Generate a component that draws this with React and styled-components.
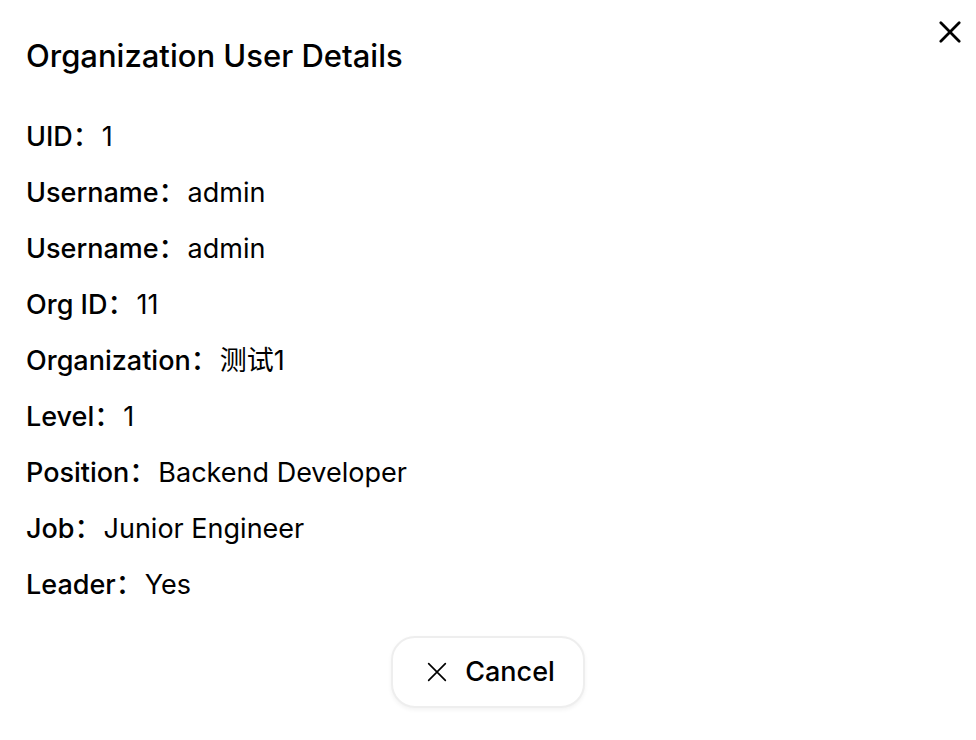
import React from "react";
import styled, { createGlobalStyle } from "styled-components";

const GlobalStyle = createGlobalStyle`
  body {
    margin: 0;
    background-color: #fff;
    color: #000;
    font-family: Inter, "Noto Sans CJK SC", sans-serif;
  }
`;

const Dialog = styled.div`
  padding: 12px 14px 32px 26px;
  font-size: 27px;
`;

const Header = styled.header`
  display: flex;
  justify-content: space-between;
  align-items: flex-start;

  h1 {
    margin: 20px 0 0;
    font-size: 31px;
    line-height: 48px;
    font-weight: 500;
  }
`;

const CloseButton = styled.button`
  display: flex;
  padding: 9px 1px;
  border: none;
  background: none;
  color: #000;
  cursor: pointer;
`;

const Details = styled.dl`
  display: flex;
  flex-direction: column;
  gap: 16px;
  margin: 37px 0 0;
`;

const DetailRow = styled.div`
  display: flex;
  gap: 2px;
  line-height: 40px;

  dt {
    font-weight: 500;
  }

  dd {
    margin: 0;
  }
`;

const Footer = styled.footer`
  display: flex;
  justify-content: center;
  margin: 31px 12px 0 0;
`;

const CancelButton = styled.button`
  display: flex;
  align-items: center;
  gap: 18px;
  padding: 14px 28px 14px 34px;
  border: 2px solid #eee;
  border-radius: 24px;
  background-color: #fff;
  box-shadow: 0 2px 4px rgba(0, 0, 0, 0.05);
  color: #000;
  font-family: inherit;
  font-size: 27px;
  font-weight: 500;
  line-height: 40px;
  cursor: pointer;
`;

const details = [
  { label: "UID", value: "1" },
  { label: "Username", value: "admin" },
  { label: "Username", value: "admin" },
  { label: "Org ID", value: "11" },
  { label: "Organization", value: "测试1" },
  { label: "Level", value: "1" },
  { label: "Position", value: "Backend Developer" },
  { label: "Job", value: "Junior Engineer" },
  { label: "Leader", value: "Yes" },
];

const CrossIcon = ({ size, strokeWidth }) => (
  <svg
    width={size}
    height={size}
    viewBox="0 0 24 24"
    fill="none"
    stroke="currentColor"
    strokeWidth={strokeWidth}
    strokeLinecap="round"
    aria-hidden="true"
  >
    <path d="M2 2 L22 22 M22 2 L2 22" />
  </svg>
);

function App() {
  return (
    <Dialog role="dialog" aria-labelledby="dialog-title">
      <GlobalStyle />
      <Header>
        <h1 id="dialog-title">Organization User Details</h1>
        <CloseButton type="button" aria-label="Close">
          <CrossIcon size={22} strokeWidth={3} />
        </CloseButton>
      </Header>
      <Details>
        {details.map((item, index) => (
          <DetailRow key={index}>
            <dt>{item.label}：</dt>
            <dd>{item.value}</dd>
          </DetailRow>
        ))}
      </Details>
      <Footer>
        <CancelButton type="button">
          <CrossIcon size={20} strokeWidth={2} />
          Cancel
        </CancelButton>
      </Footer>
    </Dialog>
  );
}

export default App;
